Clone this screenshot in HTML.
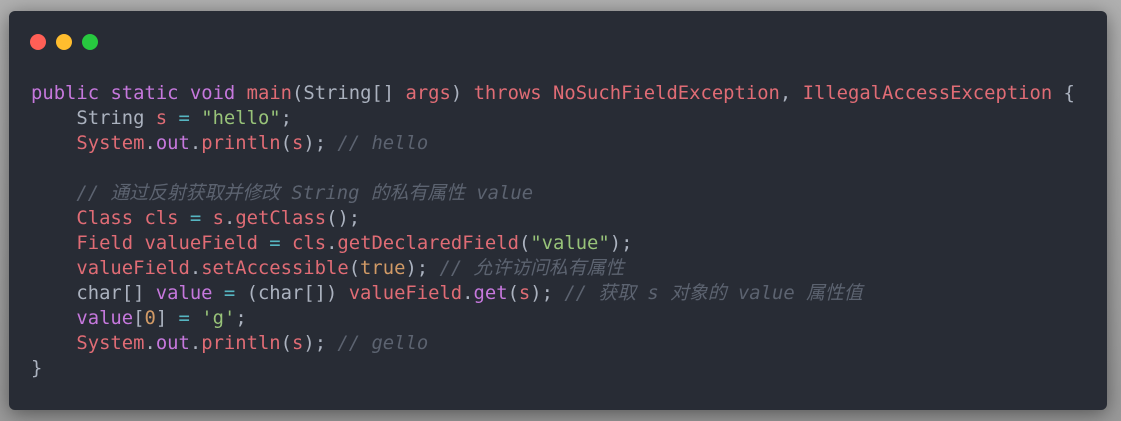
<!DOCTYPE html>
<html><head><meta charset="utf-8"><style>
html,body{margin:0;padding:0;width:1121px;height:421px;overflow:hidden;background:linear-gradient(#b0b0b0,#9a9a9a);}
.card{position:absolute;left:9px;top:11px;width:1098px;height:399px;background:#282c35;border-radius:6px;box-shadow:0 4px 20px rgba(0,0,0,0.45);}
.dot{position:absolute;top:23px;width:16px;height:16px;border-radius:50%;}
pre{position:absolute;left:22px;top:70px;margin:0;font-family:"DejaVu Sans Mono","Liberation Mono","Noto Sans CJK SC",monospace;font-size:18.85px;line-height:25px;color:#abb2bf;}
.k{color:#c678dd}.r{color:#e06c75}.c{color:#56b6c2}.g{color:#98c379}.o{color:#d19a66}.m{color:#5c6370;font-style:italic}
</style></head><body>
<div class="card">
<div class="dot" style="left:21px;background:#ff5f56"></div>
<div class="dot" style="left:47px;background:#ffbd2e"></div>
<div class="dot" style="left:73px;background:#27c93f"></div>
<pre><span class="k">public</span> <span class="k">static</span> <span class="k">void</span> <span class="r">main</span>(String[] <span class="r">args</span>) <span class="r">throws</span> <span class="r">NoSuchFieldException</span>, <span class="r">IllegalAccessException</span> {
    String <span class="r">s</span> <span class="c">=</span> <span class="g">"hello"</span>;
    <span class="r">System</span>.<span class="k">out</span>.<span class="r">println</span>(<span class="r">s</span>); <span class="m">// hello</span>

    <span class="m">// 通过反射获取并修改 String 的私有属性 value</span>
    <span class="r">Class</span> <span class="r">cls</span> <span class="c">=</span> <span class="r">s</span>.<span class="r">getClass</span>();
    <span class="r">Field</span> <span class="r">valueField</span> <span class="c">=</span> <span class="r">cls</span>.<span class="r">getDeclaredField</span>(<span class="g">"value"</span>);
    <span class="r">valueField</span>.<span class="r">setAccessible</span>(<span class="o">true</span>); <span class="m">// 允许访问私有属性</span>
    char[] <span class="k">value</span> <span class="c">=</span> (char[]) <span class="r">valueField</span>.<span class="k">get</span>(<span class="r">s</span>); <span class="m">// 获取 s 对象的 value 属性值</span>
    <span class="k">value</span>[<span class="o">0</span>] <span class="c">=</span> <span class="g">'g'</span>;
    <span class="r">System</span>.<span class="k">out</span>.<span class="r">println</span>(<span class="r">s</span>); <span class="m">// gello</span>
}</pre>
</div>
</body></html>
